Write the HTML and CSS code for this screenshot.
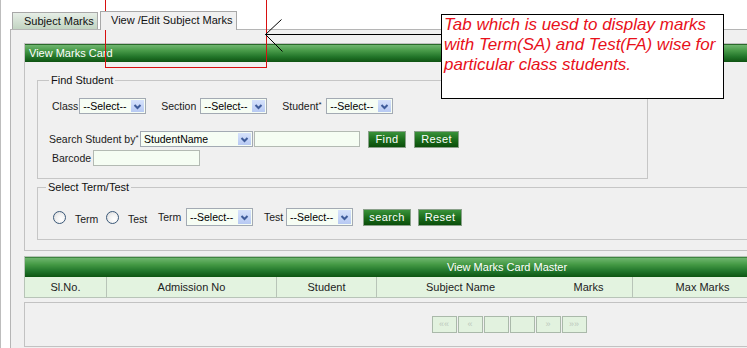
FILE: index.html
```html
<!DOCTYPE html>
<html>
<head>
<meta charset="utf-8">
<title>View Marks Card</title>
<link rel="stylesheet" href="styles.css">
</head>
<body>
<div class="tabs">
  <div class="tab tab-off">Subject Marks</div>
  <div class="tab tab-on">View /Edit Subject Marks</div>
</div>
<div class="tabpanel">
  <div class="card">
    <div class="card-head">View Marks Card</div>
    <div class="card-body">
      <fieldset class="fs fs-find">
        <legend>Find Student</legend>
        <div class="row row1">
          <div class="fg g-class"><span class="lb">Class</span><span class="sel w67"><span class="sel-t">--Select--</span><span class="arr"><svg width="13" height="13" viewBox="0 0 13 13"><path d="M3.5 5 L6.5 8 L9.5 5" stroke="#3f5c9a" stroke-width="2" fill="none"/></svg></span></span></div>
          <div class="fg g-section"><span class="lb">Section</span><span class="sel w67"><span class="sel-t">--Select--</span><span class="arr"><svg width="13" height="13" viewBox="0 0 13 13"><path d="M3.5 5 L6.5 8 L9.5 5" stroke="#3f5c9a" stroke-width="2" fill="none"/></svg></span></span></div>
          <div class="fg g-student"><span class="lb">Student<sup>*</sup></span><span class="sel w67"><span class="sel-t">--Select--</span><span class="arr"><svg width="13" height="13" viewBox="0 0 13 13"><path d="M3.5 5 L6.5 8 L9.5 5" stroke="#3f5c9a" stroke-width="2" fill="none"/></svg></span></span></div>
        </div>
        <div class="row row2">
          <div class="fg g-search"><span class="lb">Search Student by<sup>*</sup></span><span class="sel w113"><span class="sel-t">StudentName</span><span class="arr"><svg width="13" height="13" viewBox="0 0 13 13"><path d="M3.5 5 L6.5 8 L9.5 5" stroke="#3f5c9a" stroke-width="2" fill="none"/></svg></span></span></div>
          <span class="inp w106"></span>
          <span class="btn b-find">Find</span>
          <span class="btn b-reset1">Reset</span>
        </div>
        <div class="row row3">
          <div class="fg g-barcode"><span class="lb">Barcode</span><span class="inp w107"></span></div>
        </div>
      </fieldset>
      <fieldset class="fs fs-term">
        <legend>Select Term/Test</legend>
        <div class="row row4">
          <div class="rg rg1"><span class="radio"></span><span class="rlabel">Term</span></div>
          <div class="rg rg2"><span class="radio"></span><span class="rlabel">Test</span></div>
          <div class="fg g-term"><span class="lb">Term</span><span class="sel w67 h18"><span class="sel-t">--Select--</span><span class="arr"><svg width="13" height="13" viewBox="0 0 13 13"><path d="M3.5 5 L6.5 8 L9.5 5" stroke="#3f5c9a" stroke-width="2" fill="none"/></svg></span></span></div>
          <div class="fg g-test"><span class="lb">Test</span><span class="sel w67 h18"><span class="sel-t">--Select--</span><span class="arr"><svg width="13" height="13" viewBox="0 0 13 13"><path d="M3.5 5 L6.5 8 L9.5 5" stroke="#3f5c9a" stroke-width="2" fill="none"/></svg></span></span></div>
          <span class="btn b-search">search</span>
          <span class="btn b-reset2">Reset</span>
        </div>
      </fieldset>
    </div>
  </div>

  <table class="grid">
    <colgroup>
      <col class="c1"><col class="c2"><col class="c3"><col class="c4"><col class="c5"><col class="c6"><col class="c7">
    </colgroup>
    <tr><td class="grid-title" colspan="7">View Marks Card Master</td></tr>
    <tr class="grid-head">
      <th>Sl.No.</th>
      <th>Admission No</th>
      <th>Student</th>
      <th>Subject Name</th>
      <th class="nodiv">Marks</th>
      <th>Max Marks</th>
      <th></th>
    </tr>
  </table>

  <div class="pagerbox">
    <div class="pager">
      <span class="pg">««</span>
      <span class="pg">«</span>
      <span class="pg"></span>
      <span class="pg"></span>
      <span class="pg">»</span>
      <span class="pg">»»</span>
    </div>
  </div>
</div>

<div class="mark-rect"></div>
<svg class="mark-arrow" width="190" height="40" viewBox="0 0 190 40">
  <path d="M0.5 15.5 H176" stroke="#000" stroke-width="1" fill="none"/>
  <path d="M0.5 15.5 L16.5 0.5 M0.5 15.5 L17.5 32.5" stroke="#000" stroke-width="1" fill="none"/>
</svg>
<div class="note">Tab which is uesd to display marks<br>with Term(SA) and Test(FA) wise for<br>particular class students.</div>
</body>
</html>
```

FILE: styles.css
```css
html, body {
  margin: 0;
  padding: 0;
}
body {
  position: relative;
  width: 747px;
  height: 348px;
  box-sizing: border-box;
  overflow: hidden;
  background: #ffffff;
  border-left: 1px solid #bdbdbd;
  font-family: "Liberation Sans", Arial, sans-serif;
  font-size: 10.5px;
  color: #1a1a1a;
}

/* ---------- tabs ---------- */
.tabs {
  position: relative;
  z-index: 2;
  display: flex;
  align-items: flex-end;
  gap: 2px;
  height: 18px;
  padding: 11px 0 0 11px;
}
.tab {
  box-sizing: border-box;
  border: 1px solid #a8a8a8;
  border-bottom: none;
  padding-left: 11px;
  color: #111;
  white-space: nowrap;
  font-size: 11px;
}
.tab-off {
  width: 86px;
  height: 17px;
  line-height: 16px;
  background: linear-gradient(#e6eee6, #c2d4c2);
}
.tab-on {
  width: 137px;
  height: 19px;
  line-height: 17px;
  margin-bottom: -1px;
  padding-left: 10px;
  background: #f0f0f0;
}

/* ---------- tab panel ---------- */
.tabpanel {
  margin-left: 9px;
  width: 1000px;
  height: 400px;
  border: 1px solid #b5b5b5;
  background: #f0f0f0;
  padding: 13px 0 0 13px;
}

.card {
  width: 965px;
  box-sizing: border-box;
  border: 1px solid #c2c2c2;
}
.card-head {
  height: 18px;
  line-height: 18px;
  padding-left: 4px;
  color: #fff;
  font-size: 11px;
  background: linear-gradient(#78bb78 0%, #4a9c4a 35%, #23762a 70%, #0e5312 100%);
  box-shadow: inset 0 1px 0 #2a6a2a;
}
.card-body {
  padding: 12px 0 10px 12px;
}

/* ---------- fieldsets ---------- */
.fs {
  margin: 0;
  box-sizing: border-box;
  border: 1px solid #c6c6c6;
  min-width: 0;
}
.fs legend {
  padding: 0 2px;
  line-height: 13px;
  font-size: 11px;
  color: #111;
}
.fs-find {
  width: 611px;
  padding: 0 0 12px 11px;
}
.fs-term {
  width: 930px;
  margin-top: 2px;
  padding: 0 0 13px 8px;
}

.row {
  display: flex;
  align-items: center;
}
.row1 { margin-top: 11px; height: 16px; padding-left: 3px; }
.row2 { margin-top: 17px; height: 16px; }
.row3 { margin-top: 3px; height: 16px; padding-left: 3px; }
.row4 { margin-top: 14px; height: 18px; padding-left: 7px; }

.fg {
  flex: none;
  display: flex;
  align-items: center;
  justify-content: space-between;
  gap: 1px;
}
.lb {
  white-space: nowrap;
}
.lb sup {
  font-size: 8px;
  line-height: 0;
  vertical-align: 3px;
}
.g-class   { min-width: 94px; }
.g-section { min-width: 106px; margin-left: 15px; }
.g-student { min-width: 111px; margin-left: 15px; }
.g-search  { min-width: 204px; }
.g-barcode { min-width: 148px; }
.g-term    { min-width: 95px; margin-left: 2px; }
.g-test    { min-width: 89px; margin-left: 11px; }

.rg {
  flex: none;
  display: flex;
  align-items: center;
}
.rg1 { width: 53px; }
.rg2 { width: 50px; }
.radio {
  flex: none;
  width: 13px;
  height: 13px;
  box-sizing: border-box;
  border-radius: 50%;
  border: 1px solid #3a5878;
  background: radial-gradient(circle at 65% 65%, #ffffff 0%, #f2f2f2 45%, #d6d6d6 100%);
}
.rlabel {
  margin-left: 9px;
  padding-top: 4px;
}

/* ---------- selects, inputs, buttons ---------- */
.sel {
  flex: none;
  box-sizing: border-box;
  height: 16px;
  display: flex;
  align-items: center;
  border: 1px solid #a3aab3;
  background: #f6fdf4;
  color: #000;
}
.sel.h18 { height: 18px; }
.sel-t {
  flex: 1;
  padding-left: 3px;
  white-space: nowrap;
  overflow: hidden;
}
.arr {
  flex: none;
  width: 13px;
  height: 12px;
  margin-right: 1px;
  display: flex;
  align-items: center;
  justify-content: center;
  background: linear-gradient(#d6e2fb, #b7c9f3);
}
.arr svg { display: block; }
.sel.h18 .arr { height: 14px; }
.w67 { width: 67px; }
.w113 { width: 113px; }

.inp {
  flex: none;
  display: block;
  box-sizing: border-box;
  height: 16px;
  border: 1px solid #b3bab3;
  background: #f5fdf3;
}
.w106 { width: 106px; margin-left: 1px; }
.w107 { width: 107px; }

.btn {
  flex: none;
  box-sizing: border-box;
  height: 17px;
  line-height: 15px;
  text-align: center;
  color: #fff;
  font-size: 11px;
  letter-spacing: 0.4px;
  border: 1px solid #8aa08a;
  background: linear-gradient(#3a923a 0%, #1c6e1c 50%, #0a4d0a 100%);
}
.b-find   { width: 38px; margin-left: 8px; }
.b-reset1 { width: 45px; margin-left: 8px; }
.b-search { width: 48px; margin-left: 10px; }
.b-reset2 { width: 44px; margin-left: 7px; }

/* ---------- grid ---------- */
.grid {
  margin-top: 5px;
  width: 965px;
  table-layout: fixed;
  border-collapse: collapse;
  border: 1px solid #b7c4b7;
  font-size: 11px;
}
.c1 { width: 82px; }
.c2 { width: 170px; }
.c3 { width: 100px; }
.c4 { width: 168px; }
.c5 { width: 88px; }
.c6 { width: 140px; }
.c7 { width: 217px; }
.grid-title {
  height: 20px;
  padding: 0;
  text-align: center;
  color: #fff;
  background: linear-gradient(#72b872 0%, #449944 35%, #1f732a 70%, #0c5210 100%);
}
.grid-head th {
  height: 20px;
  padding: 0;
  font-weight: normal;
  color: #222;
  background: #e3f3e0;
  border-left: 1px solid #b8c4b8;
  border-bottom: 1px solid #b8c4b8;
}
.grid-head th:first-child { border-left: none; }
.grid-head th.nodiv { border-left-color: #e3f3e0; }

.pagerbox {
  margin-top: 4px;
  width: 965px;
  height: 45px;
  box-sizing: border-box;
  border: 1px solid #c2c2c2;
  display: flex;
  align-items: center;
  justify-content: center;
}
.pager {
  display: flex;
  gap: 1px;
  margin-left: 5px;
}
.pg {
  width: 25px;
  height: 17px;
  box-sizing: border-box;
  border: 1px solid #aab9aa;
  background: #e2f2df;
  color: #bcc8bc;
  font-size: 9px;
  line-height: 15px;
  text-align: center;
}

/* ---------- annotation overlay ---------- */
.mark-rect {
  position: absolute;
  left: 104px;
  top: -2px;
  width: 162px;
  height: 70px;
  box-sizing: border-box;
  border: 1px solid #d81010;
}
.mark-arrow {
  position: absolute;
  left: 264px;
  top: 19px;
}
.note {
  position: absolute;
  left: 440px;
  top: 14px;
  width: 283px;
  height: 85px;
  box-sizing: border-box;
  border: 1px solid #000;
  background: #fff;
  padding: 0 0 0 2px;
  color: #e8101a;
  font-family: "Liberation Sans", Arial, sans-serif;
  font-style: italic;
  font-size: 17px;
  line-height: 20px;
  white-space: nowrap;
}
```
